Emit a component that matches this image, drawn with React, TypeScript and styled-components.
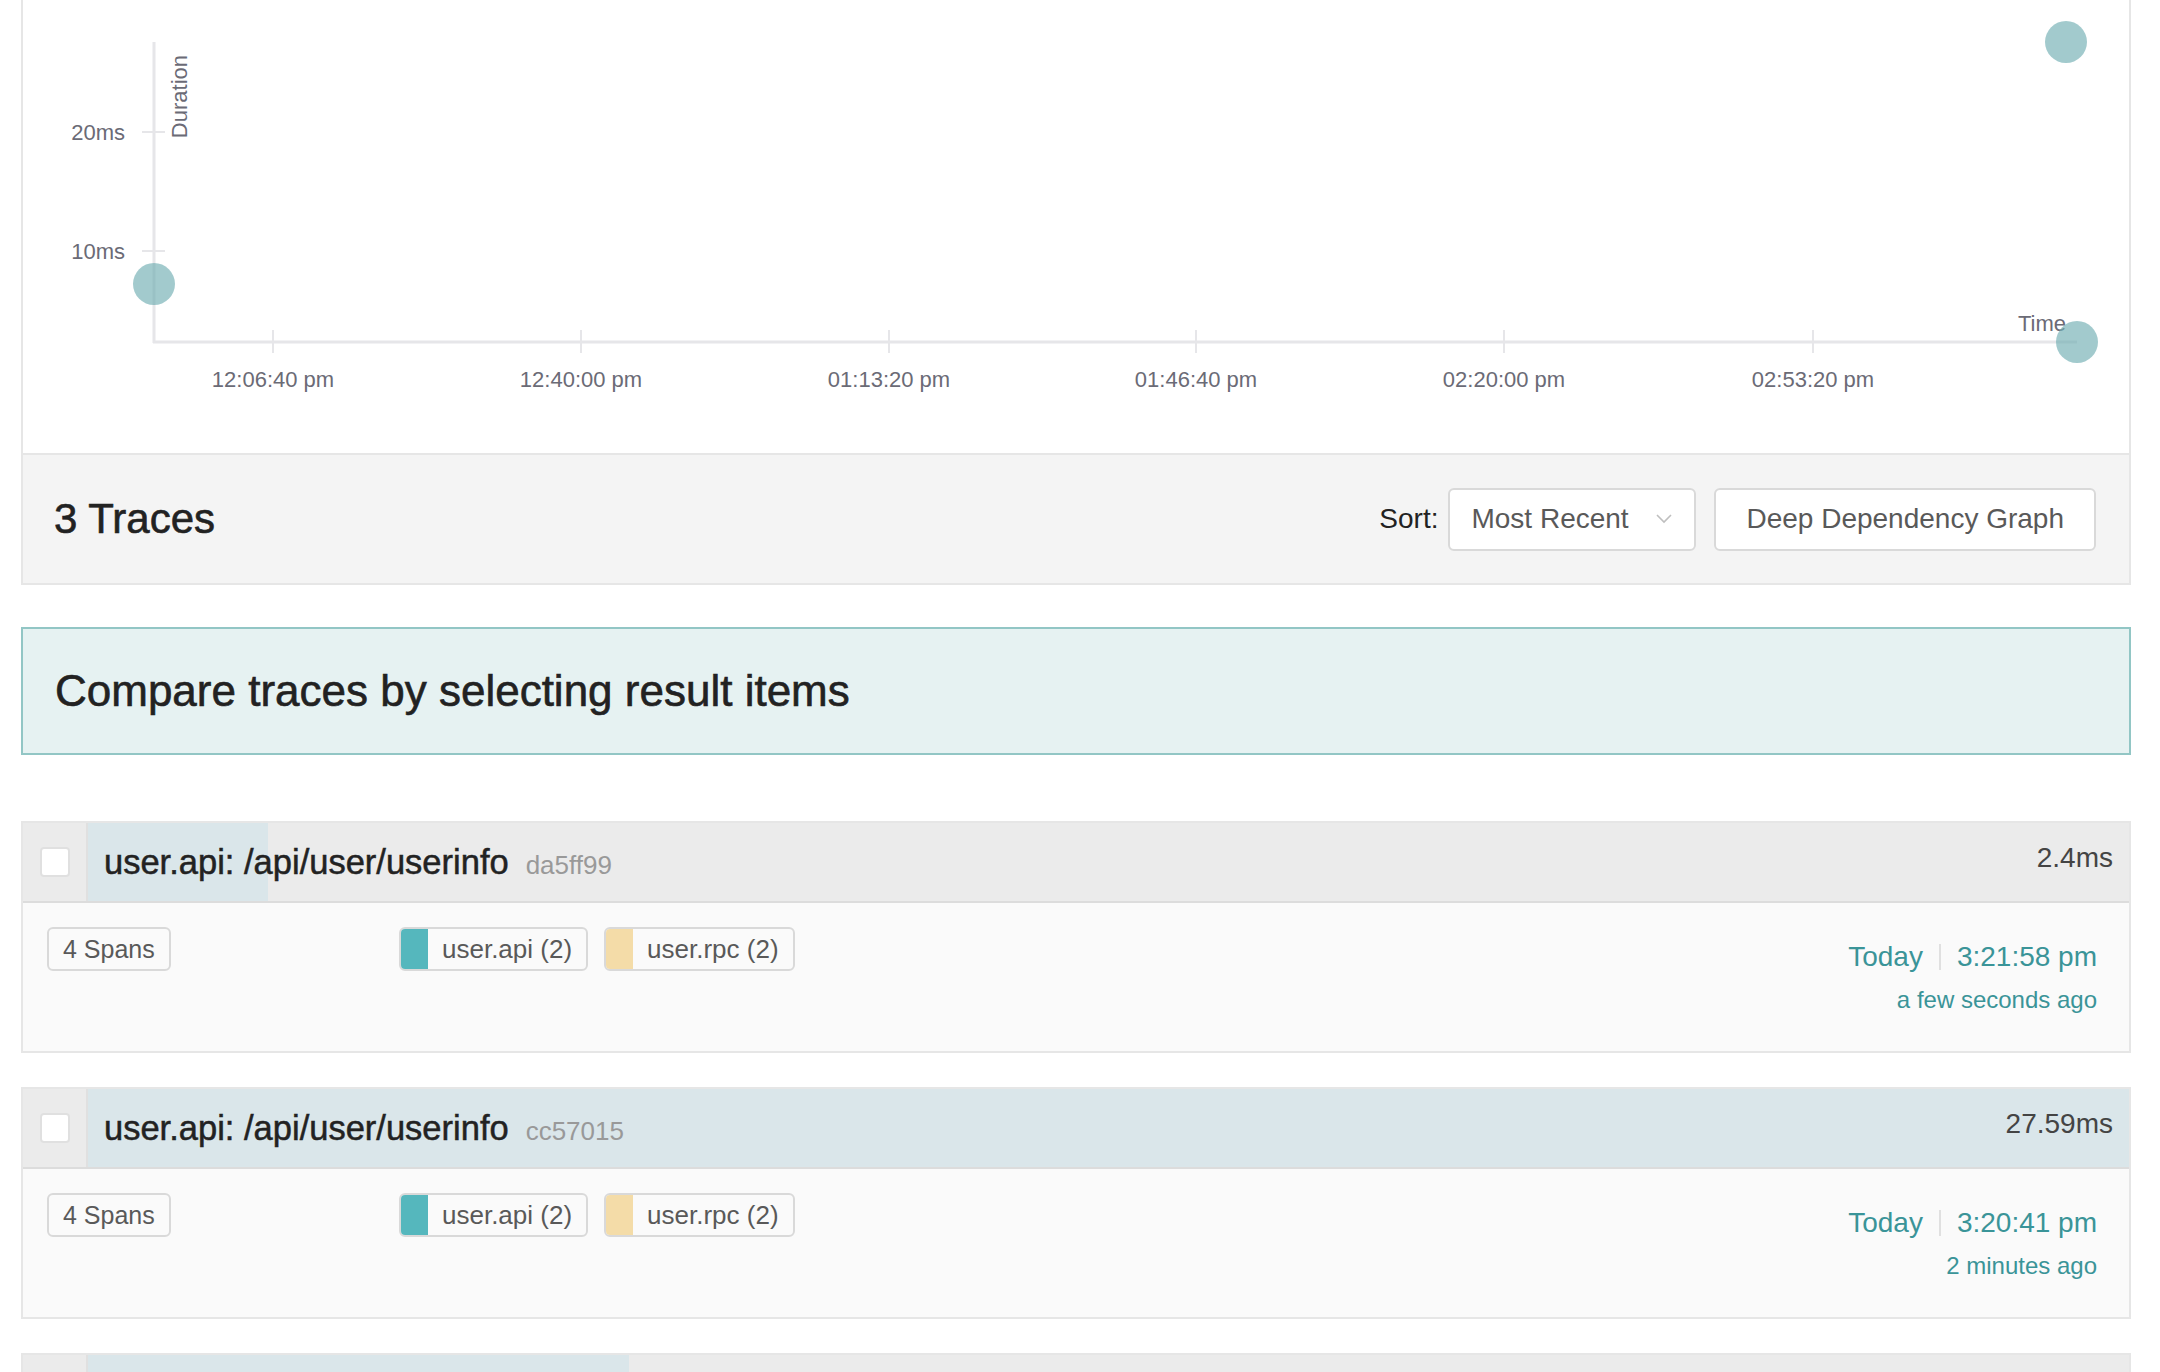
import React from 'react';
import styled, { createGlobalStyle } from 'styled-components';

const GlobalStyle = createGlobalStyle`
  html, body {
    margin: 0;
    padding: 0;
    background: #ffffff;
    overflow: hidden;
  }
  body {
    font-family: 'Liberation Sans', Helvetica, Arial, sans-serif;
    color: #222;
  }
`;

const Page = styled.div`
  height: 100vh;
  overflow: hidden;
  padding: 0 29px 0 21px;
  box-sizing: border-box;
`;

const ChartPanel = styled.div`
  height: 455px;
  box-sizing: border-box;
  border: 2px solid #e6e6e6;
  border-top: none;
  background: #fff;
`;

const ResultsHeader = styled.div`
  height: 130px;
  box-sizing: border-box;
  display: flex;
  align-items: center;
  justify-content: space-between;
  padding: 0 33px 0 31px;
  background: #f4f4f4;
  border: 2px solid #e6e6e6;
  border-top: none;
`;

const Heading = styled.h2`
  margin: 0;
  font-size: 42px;
  font-weight: 400;
  color: #222;
  -webkit-text-stroke: 0.6px #222;
`;

const Controls = styled.div`
  display: flex;
  align-items: center;
`;

const SortLabel = styled.span`
  font-size: 28px;
  color: #222;
  margin-right: 10px;
`;

const Select = styled.div`
  width: 248px;
  height: 63px;
  box-sizing: border-box;
  display: flex;
  align-items: center;
  justify-content: space-between;
  padding: 0 22px 0 21px;
  background: #fff;
  border: 2px solid #d9d9d9;
  border-radius: 6px;
  font-size: 28px;
  color: #595959;
`;

const Button = styled.button`
  height: 63px;
  margin-left: 18px;
  padding: 0 30px;
  box-sizing: border-box;
  background: #fff;
  border: 2px solid #d9d9d9;
  border-radius: 6px;
  font-family: inherit;
  font-size: 28px;
  color: #595959;
`;

const Banner = styled.div`
  margin-top: 42px;
  height: 128px;
  box-sizing: border-box;
  display: flex;
  align-items: center;
  padding-left: 32px;
  background: #e6f2f2;
  border: 2px solid #92c6c5;
  font-size: 44px;
  color: #222;
  -webkit-text-stroke: 0.6px #222;
`;

const ResultList = styled.div`
  margin-top: 66px;
  display: flex;
  flex-direction: column;
  gap: 34px;
`;

const Item = styled.div`
  border: 2px solid #e6e6e6;
  background: #fafafa;
`;

const ItemHeader = styled.div`
  display: flex;
  height: 80px;
  box-sizing: border-box;
  border-bottom: 2px solid #dcdcdc;
  background: #ebebeb;
`;

const CheckCell = styled.div`
  width: 63px;
  flex-shrink: 0;
  display: flex;
  align-items: center;
  justify-content: center;
  border-right: 2px solid #e0e0e0;
`;

const Checkbox = styled.span`
  width: 30px;
  height: 30px;
  box-sizing: border-box;
  background: #fff;
  border: 2px solid #e0e0e0;
  border-radius: 4px;
`;

const TitleBar = styled.div<{ $pct: number }>`
  flex: 1;
  display: flex;
  align-items: center;
  justify-content: space-between;
  padding: 0 16px;
  background: linear-gradient(
    to right,
    #dae6ea ${(p) => p.$pct}%,
    #ebebeb ${(p) => p.$pct}%
  );
`;

const Title = styled.div`
  display: flex;
  align-items: baseline;
`;

const TraceName = styled.span`
  font-size: 34.5px;
  color: #222;
  -webkit-text-stroke: 0.5px #222;
`;

const TraceId = styled.span`
  margin-left: 17px;
  font-size: 26px;
  color: #999;
`;

const Duration = styled.span`
  font-size: 28px;
  color: #444;
  margin-top: -8px;
`;

const ItemBody = styled.div`
  display: flex;
  height: 148px;
  box-sizing: border-box;
  padding: 24px 32px 0 24px;
`;

const SpansCol = styled.div`
  width: 352px;
  flex-shrink: 0;
`;

const Tag = styled.span`
  display: inline-flex;
  align-items: center;
  height: 44px;
  box-sizing: border-box;
  padding: 0 14px;
  border: 2px solid #d9d9d9;
  border-radius: 6px;
  background: #fafafa;
  font-size: 25px;
  color: #595959;
`;

const ServicesCol = styled.div`
  flex: 1;
  display: flex;
  align-items: flex-start;
  gap: 16px;
`;

const ServiceTag = styled.span`
  display: inline-flex;
  align-items: stretch;
  height: 44px;
  box-sizing: border-box;
  border: 2px solid #d9d9d9;
  border-radius: 6px;
  overflow: hidden;
  background: #fafafa;
  font-size: 26px;
  color: #595959;
`;

const Swatch = styled.span<{ $color: string }>`
  width: 27px;
  background: ${(p) => p.$color};
`;

const ServiceLabel = styled.span`
  display: flex;
  align-items: center;
  padding: 0 14px 0 14px;
`;

const TimeCol = styled.div`
  display: flex;
  flex-direction: column;
  align-items: flex-end;
  padding-top: 10px;
  color: #3a9498;
`;

const TimeRow = styled.div`
  display: flex;
  align-items: center;
  height: 40px;
  font-size: 28px;
`;

const Divider = styled.span`
  width: 2px;
  height: 26px;
  margin: 0 16px;
  background: #e0e0e0;
`;

const Ago = styled.div`
  margin-top: 6px;
  font-size: 24px;
  line-height: 34px;
`;

const ChartSvg = styled.svg`
  display: block;
  font-family: 'Liberation Sans', Helvetica, Arial, sans-serif;
`;

const AXIS = '#e6e6e9';
const LABEL = '#6b6b76';

const xTicks = [
  { x: 250, label: '12:06:40 pm' },
  { x: 558, label: '12:40:00 pm' },
  { x: 866, label: '01:13:20 pm' },
  { x: 1173, label: '01:46:40 pm' },
  { x: 1481, label: '02:20:00 pm' },
  { x: 1790, label: '02:53:20 pm' },
];

const yTicks = [
  { y: 132, label: '20ms' },
  { y: 251, label: '10ms' },
];

const dots = [
  { x: 131, y: 284 },
  { x: 2043, y: 42 },
  { x: 2054, y: 342 },
];

const ScatterPlot: React.FC = () => (
  <ChartSvg width="2106" height="453" viewBox="0 0 2106 453">
    <line x1="131" y1="42" x2="131" y2="343" stroke={AXIS} strokeWidth="3" />
    <line x1="130" y1="342" x2="2054" y2="342" stroke={AXIS} strokeWidth="3" />
    {yTicks.map((t) => (
      <g key={t.label}>
        <line x1="119" y1={t.y} x2="142" y2={t.y} stroke={AXIS} strokeWidth="2" />
        <text x="102" y={t.y + 8} fontSize="22" fill={LABEL} textAnchor="end">
          {t.label}
        </text>
      </g>
    ))}
    {xTicks.map((t) => (
      <g key={t.label}>
        <line x1={t.x} y1="330" x2={t.x} y2="353" stroke={AXIS} strokeWidth="2" />
        <text x={t.x} y="387" fontSize="22" fill={LABEL} textAnchor="middle">
          {t.label}
        </text>
      </g>
    ))}
    <text transform="translate(164,55) rotate(-90)" fontSize="22" fill={LABEL} textAnchor="end">
      Duration
    </text>
    <text x="2043" y="331" fontSize="22" fill={LABEL} textAnchor="end">
      Time
    </text>
    {dots.map((d, i) => (
      <circle key={i} cx={d.x} cy={d.y} r="21" fill="#70adb2" fillOpacity="0.65" />
    ))}
  </ChartSvg>
);

type Trace = {
  name: string;
  id: string;
  duration: string;
  pct: number;
  time: string;
  ago: string;
};

const traces: Trace[] = [
  { name: 'user.api: /api/user/userinfo', id: 'da5ff99', duration: '2.4ms', pct: 8.8, time: '3:21:58 pm', ago: 'a few seconds ago' },
  { name: 'user.api: /api/user/userinfo', id: 'cc57015', duration: '27.59ms', pct: 100, time: '3:20:41 pm', ago: '2 minutes ago' },
  { name: 'user.api: /api/user/userinfo', id: '4b1e2c7', duration: '7.31ms', pct: 26.5, time: '3:19:12 pm', ago: '3 minutes ago' },
];

const services = [
  { name: 'user.api (2)', color: '#55b7bd' },
  { name: 'user.rpc (2)', color: '#f4dca8' },
];

const ResultItem: React.FC<{ trace: Trace }> = ({ trace }) => (
  <Item>
    <ItemHeader>
      <CheckCell>
        <Checkbox />
      </CheckCell>
      <TitleBar $pct={trace.pct}>
        <Title>
          <TraceName>{trace.name}</TraceName>
          <TraceId>{trace.id}</TraceId>
        </Title>
        <Duration>{trace.duration}</Duration>
      </TitleBar>
    </ItemHeader>
    <ItemBody>
      <SpansCol>
        <Tag>4 Spans</Tag>
      </SpansCol>
      <ServicesCol>
        {services.map((s) => (
          <ServiceTag key={s.name}>
            <Swatch $color={s.color} />
            <ServiceLabel>{s.name}</ServiceLabel>
          </ServiceTag>
        ))}
      </ServicesCol>
      <TimeCol>
        <TimeRow>
          <span>Today</span>
          <Divider />
          <span>{trace.time}</span>
        </TimeRow>
        <Ago>{trace.ago}</Ago>
      </TimeCol>
    </ItemBody>
  </Item>
);

const App: React.FC = () => {
  return (
    <>
      <GlobalStyle />
      <Page>
        <ChartPanel>
          <ScatterPlot />
        </ChartPanel>
        <ResultsHeader>
          <Heading>3 Traces</Heading>
          <Controls>
            <SortLabel>Sort:</SortLabel>
            <Select>
              <span>Most Recent</span>
              <svg width="16" height="10" viewBox="0 0 16 10">
                <polyline points="1,1 8,8 15,1" fill="none" stroke="#bfbfbf" strokeWidth="1.6" />
              </svg>
            </Select>
            <Button>Deep Dependency Graph</Button>
          </Controls>
        </ResultsHeader>
        <Banner>Compare traces by selecting result items</Banner>
        <ResultList>
          {traces.map((t) => (
            <ResultItem key={t.id} trace={t} />
          ))}
        </ResultList>
      </Page>
    </>
  );
};

export default App;
